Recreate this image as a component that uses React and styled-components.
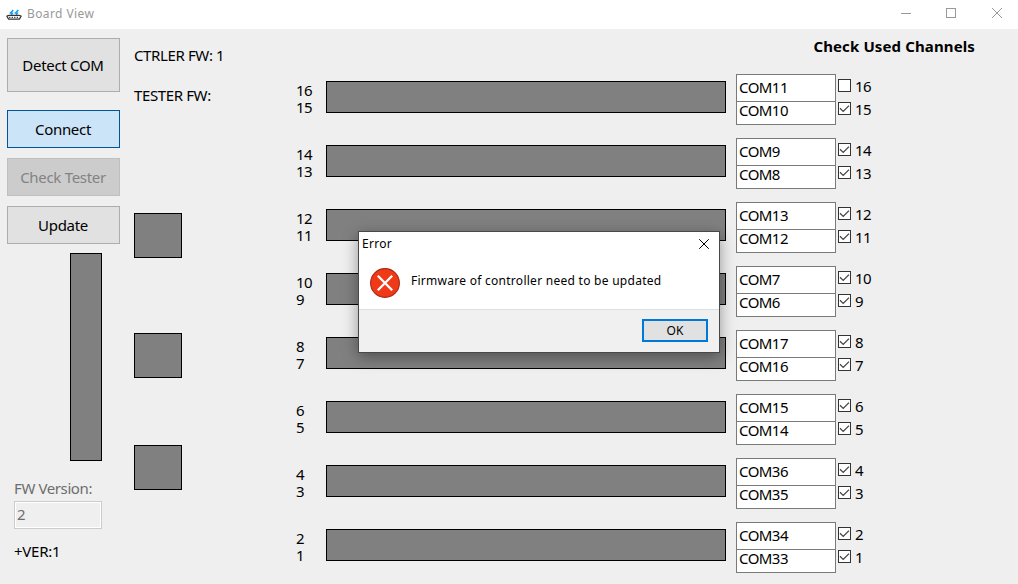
import React from 'react';
import styled, { createGlobalStyle } from 'styled-components';

const GlobalStyle = createGlobalStyle`
  * { box-sizing: border-box; }
  body { margin: 0; overflow: hidden; background: #efefef; }
`;

const Window = styled.div`
  position: relative;
  width: 1018px;
  height: 584px;
  display: flex;
  flex-direction: column;
  overflow: hidden;
  background: #efefef;
  color: #000;
  font: 15px/20px 'Noto Sans', sans-serif;
  letter-spacing: -0.3px;
  white-space: nowrap;
`;

const TitleBar = styled.header`
  flex: none;
  height: 29px;
  padding: 0 15px 0 6px;
  display: flex;
  align-items: center;
  background: #fff;
`;

const Title = styled.span`
  flex: 1;
  margin: -2px 0 0 5px;
  font-size: 12px;
  letter-spacing: 0.4px;
  color: #999;
`;

const WindowControls = styled.div`
  display: flex;
  gap: 34px;
  margin-top: -3px;
`;

const Body = styled.main`
  flex: 1;
  min-height: 0;
  display: flex;
`;

const Sidebar = styled.aside`
  width: 120px;
  padding: 9px 0 0 7px;
  display: flex;
  flex-direction: column;
`;

const buttonColors = {
  normal: ['#e1e1e1', '#adadad', '#000'],
  hot: ['#cce4f7', '#005499', '#000'],
  disabled: ['#cccccc', '#bfbfbf', '#838383'],
};

const Button = styled.button`
  flex: none;
  height: ${(p) => p.$height || 38}px;
  margin: 0 0 ${(p) => p.$gap}px;
  padding: 0 1px 1px 0;
  font: inherit;
  letter-spacing: inherit;
  background: ${(p) => buttonColors[p.$look || 'normal'][0]};
  border: 1px solid ${(p) => buttonColors[p.$look || 'normal'][1]};
  color: ${(p) => buttonColors[p.$look || 'normal'][2]};
`;

const Block = styled.div`
  flex: none;
  width: ${(p) => p.$width}px;
  height: ${(p) => p.$height}px;
  background: #808080;
  border: 1px solid #000;
`;

const ProgressColumn = styled.div`
  display: flex;
  justify-content: flex-end;
  padding-right: 18px;
`;

const FieldLabel = styled.label`
  margin: 17px 0 0 7px;
  letter-spacing: -0.4px;
  color: #6d6d6d;
`;

const VersionField = styled.div`
  width: 88px;
  height: 28px;
  margin: 3px 0 0 7px;
  padding: 2px 0 0 2px;
  border: 1px solid #ccc;
  box-shadow: inset 0 0 0 1px #fff;
  color: #6d6d6d;
`;

const VersionText = styled.div`
  margin: 12px 0 0 7px;
  letter-spacing: -0.25px;
`;

const StatusColumn = styled.section`
  width: 176px;
  padding: 16px 0 0 14px;
  display: flex;
  flex-direction: column;
`;

const StatusText = styled.div`
  height: 40px;
  letter-spacing: -0.38px;
`;

const Lamps = styled.div`
  display: flex;
  flex-direction: column;
  margin-top: 88px;
`;

const LampSlot = styled.div`
  height: ${(p) => p.$height}px;
`;

const Channels = styled.section`
  flex: 1;
`;

const Heading = styled.h1`
  height: 45px;
  margin: 0;
  padding: 7px 43px 0 0;
  font-size: 15px;
  line-height: 20px;
  letter-spacing: 0.12px;
  text-align: right;
`;

const ChannelRow = styled.div`
  height: 64px;
  display: flex;
  align-items: flex-start;
`;

const ChannelNumbers = styled.div`
  width: 30px;
  padding-top: 8px;
  line-height: 17px;
  letter-spacing: -0.6px;
`;

const BarSlot = styled.div`
  width: 410px;
  padding-top: 7px;
`;

const Ports = styled.div`
  width: 100px;
  height: 51px;
  background: #fff;
  border: 1px solid #7a7a7a;
  letter-spacing: -0.55px;
`;

const Port = styled.div`
  height: ${(p) => (p.$first ? 27 : 22)}px;
  padding: ${(p) => (p.$first ? 2 : 0)}px 0 0 2px;
  line-height: ${(p) => (p.$first ? 20 : 17)}px;
  border-bottom: ${(p) => (p.$first ? '1px solid #7a7a7a' : '0')};
`;

const Checks = styled.div`
  padding: 0 0 0 2px;
  letter-spacing: -0.6px;
`;

const Check = styled.div`
  height: 23px;
  display: flex;
  align-items: center;
  gap: 4px;
`;

const CheckBox = styled.span`
  width: 13px;
  height: 13px;
  display: flex;
  background: #fff;
  border: 1px solid #333;
`;

const Dialog = styled.div`
  position: absolute;
  left: 358px;
  top: 231px;
  width: 362px;
  height: 122px;
  display: flex;
  flex-direction: column;
  background: #fff;
  border: 1px solid #484848;
  box-shadow: 0 4px 14px rgba(0, 0, 0, 0.38);
  font-size: 12px;
  letter-spacing: 0.27px;
`;

const DialogTitle = styled.div`
  display: flex;
  justify-content: space-between;
  align-items: center;
  height: 24px;
  padding: 0 10px 0 3px;
`;

const DialogMessage = styled.div`
  display: flex;
  height: 53px;
  padding: 12px 0 0 11px;
  gap: 11px;
`;

const MessageText = styled.span`
  padding-top: 3px;
`;

const DialogFooter = styled.div`
  flex: 1;
  display: flex;
  justify-content: flex-end;
  padding: 9px 11px 0 0;
  background: #f0f0f0;
  border-top: 1px solid #dfdfdf;
`;

const OkButton = styled.button`
  width: 66px;
  height: 23px;
  padding: 0;
  font: inherit;
  line-height: 18px;
  color: #000;
  background: #e1e1e1;
  border: 2px solid #0078d7;
`;

const AppIcon = () => (
  <svg width="16" height="12" viewBox="0 0 16 12" fill="none">
    <path d="M7.2 1L4.4 4.2M12.2 1L9.4 4.2" stroke="#0a9df0" strokeWidth="1.5" />
    <path d="M3.6 4.2H6.4L5.4 5.8M8.6 4.2H11.4L10.4 5.8" stroke="#0a9df0" strokeWidth="1.3" />
    <path d="M0.6 7L3 6.4H13L15.4 7" stroke="#333" strokeWidth="1.2" />
    <path d="M0.8 7L2.6 10.2H13.4L15.2 7" stroke="#333" strokeWidth="1.3" strokeLinejoin="round" />
    <path d="M3.2 8.4H13" stroke="#333" strokeWidth="1.1" strokeDasharray="1.2 1.3" />
  </svg>
);

const Cross = ({ size, color }) => (
  <svg width={size} height={size} viewBox="0 0 10 10">
    <path d="M0.2 0.2L9.8 9.8M9.8 0.2L0.2 9.8" stroke={color} strokeWidth="1" />
  </svg>
);

const ErrorIcon = () => (
  <svg width="30" height="30" viewBox="0 0 30 30">
    <circle cx="15" cy="15" r="14.4" fill="#f03a17" stroke="#a92a17" strokeWidth="1.1" />
    <path d="M7.8 7.8L22.2 22.2M22.2 7.8L7.8 22.2" stroke="#fff" strokeWidth="2.3" />
  </svg>
);

const Tick = () => (
  <svg width="11" height="11" viewBox="0 0 11 11">
    <path d="M1 5.3L4.2 8.4L10 2.6" fill="none" stroke="#444" strokeWidth="1.3" />
  </svg>
);

const rows = [
  [16, 'COM11', 'COM10'],
  [14, 'COM9', 'COM8'],
  [12, 'COM13', 'COM12'],
  [10, 'COM7', 'COM6'],
  [8, 'COM17', 'COM16'],
  [6, 'COM15', 'COM14'],
  [4, 'COM36', 'COM35'],
  [2, 'COM34', 'COM33'],
];

const ChannelCheck = ({ number }) => (
  <Check>
    <CheckBox>{number !== 16 && <Tick />}</CheckBox>
    {number}
  </Check>
);

export default function App() {
  return (
    <Window>
      <GlobalStyle />
      <TitleBar>
        <AppIcon />
        <Title>Board View</Title>
        <WindowControls>
          <svg width="12" height="12" viewBox="0 0 12 12">
            <path d="M2 6.5H12" stroke="#999" />
          </svg>
          <svg width="12" height="12" viewBox="0 0 12 12">
            <rect x="1.5" y="1.5" width="9" height="9" fill="none" stroke="#999" />
          </svg>
          <svg width="12" height="12" viewBox="0 0 12 12">
            <path d="M1 1L11 11M11 1L1 11" stroke="#999" />
          </svg>
        </WindowControls>
      </TitleBar>
      <Body>
        <Sidebar>
          <Button $height={54} $gap={18}>Detect COM</Button>
          <Button $look="hot" $gap={10}>Connect</Button>
          <Button $look="disabled" $gap={10}>Check Tester</Button>
          <Button $gap={9}>Update</Button>
          <ProgressColumn>
            <Block $width={32} $height={208} />
          </ProgressColumn>
          <FieldLabel>FW Version:</FieldLabel>
          <VersionField>2</VersionField>
          <VersionText>+VER:1</VersionText>
        </Sidebar>
        <StatusColumn>
          <StatusText>CTRLER FW: 1</StatusText>
          <StatusText>TESTER FW:</StatusText>
          <Lamps>
            <LampSlot $height={120}><Block $width={48} $height={45} /></LampSlot>
            <LampSlot $height={112}><Block $width={48} $height={45} /></LampSlot>
            <LampSlot $height={45}><Block $width={48} $height={45} /></LampSlot>
          </Lamps>
        </StatusColumn>
        <Channels>
          <Heading>Check Used Channels</Heading>
          {rows.map(([number, upper, lower]) => (
            <ChannelRow key={number}>
              <ChannelNumbers>
                <div>{number}</div>
                <div>{number - 1}</div>
              </ChannelNumbers>
              <BarSlot><Block $width={400} $height={32} /></BarSlot>
              <Ports>
                <Port $first>{upper}</Port>
                <Port>{lower}</Port>
              </Ports>
              <Checks>
                <ChannelCheck number={number} />
                <ChannelCheck number={number - 1} />
              </Checks>
            </ChannelRow>
          ))}
        </Channels>
      </Body>
      <Dialog role="dialog">
        <DialogTitle>
          Error
          <Cross size={10} color="#000" />
        </DialogTitle>
        <DialogMessage>
          <ErrorIcon />
          <MessageText>Firmware of controller need to be updated</MessageText>
        </DialogMessage>
        <DialogFooter>
          <OkButton>OK</OkButton>
        </DialogFooter>
      </Dialog>
    </Window>
  );
}
